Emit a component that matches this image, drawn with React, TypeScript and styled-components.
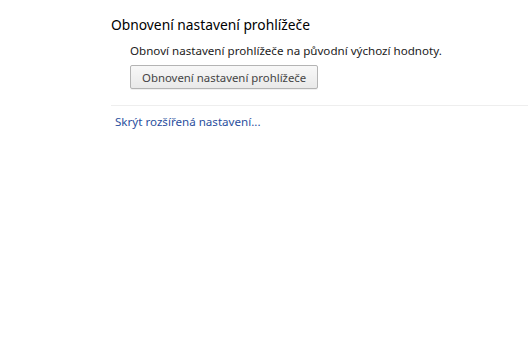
import styled, { createGlobalStyle } from 'styled-components'

const GlobalStyle = createGlobalStyle`
  html, body {
    margin: 0;
    padding: 0;
    background: #fff;
  }
  body {
    font-family: "Noto Sans", "DejaVu Sans", sans-serif;
    color: #303030;
  }
`

const Page = styled.div`
  padding: 15px 0 0 111px;
`

const Section = styled.section`
  display: flex;
  flex-direction: column;
`

const SectionTitle = styled.h3`
  margin: 0;
  font-size: 13.8px;
  font-weight: normal;
  line-height: 20px;
  color: #000;
`

const SectionBody = styled.div`
  display: flex;
  flex-direction: column;
  align-items: flex-start;
  padding-left: 19px;
  padding-top: 8px;
`

const Description = styled.p`
  margin: 0;
  font-size: 11.6px;
  line-height: 16px;
  color: #222;
`

const PlainButton = styled.button`
  margin-top: 6px;
  height: 24px;
  padding: 0 11px;
  font-family: inherit;
  font-size: 11.4px;
  color: #444;
  background: linear-gradient(#f8f8f8, #e9e9e9);
  border: 1px solid #b4b4b4;
  border-radius: 2px;
  box-shadow: 0 1px 0 rgba(0, 0, 0, 0.06);
`

const Separator = styled.hr`
  margin: 16px 0 0;
  border: 0;
  border-top: 1px solid #eeeeee;
`

const Footer = styled.div`
  padding: 3px 0 0 4px;
`

const Link = styled.a`
  font-size: 11.6px;
  color: #2a4f9e;
  text-decoration: none;
`

export default function App() {
  return (
    <>
      <GlobalStyle />
      <Page>
        <Section>
          <SectionTitle>Obnovení nastavení prohlížeče</SectionTitle>
          <SectionBody>
            <Description>Obnoví nastavení prohlížeče na původní výchozí hodnoty.</Description>
            <PlainButton>Obnovení nastavení prohlížeče</PlainButton>
          </SectionBody>
        </Section>
        <Separator />
        <Footer>
          <Link href="#">Skrýt rozšířená nastavení...</Link>
        </Footer>
      </Page>
    </>
  )
}
